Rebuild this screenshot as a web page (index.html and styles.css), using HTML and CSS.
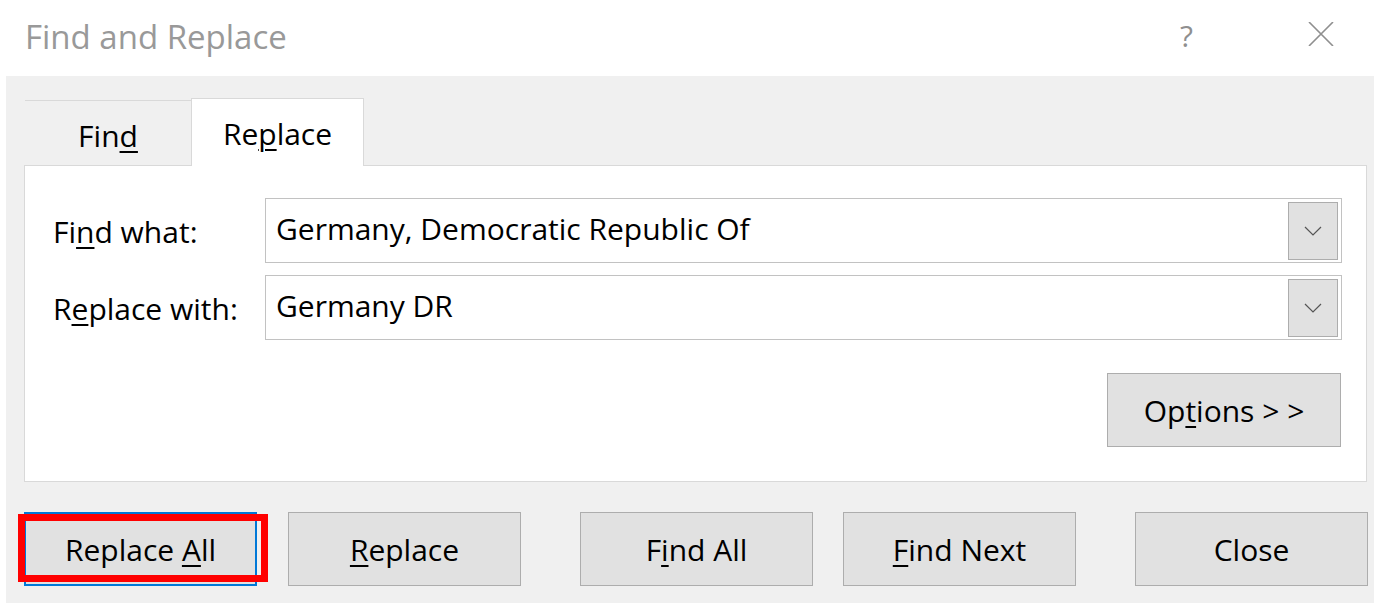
FILE: index.html
```html
<!DOCTYPE html>
<html>
<head>
<meta charset="utf-8">
<link rel="stylesheet" href="styles.css">
</head>
<body>
<div class="titlebar">
  <div class="title">Find and Replace</div>
  <div class="help">?</div>
  <svg class="close-x" width="26" height="24" viewBox="0 0 26 24"><path d="M1 0 L25 24 M25 0 L1 24" stroke="#8f8f8f" stroke-width="1.6" fill="none"/></svg>
</div>
<div class="panel">
  <div class="tabs">
    <div class="tab">Fin<u>d</u></div>
    <div class="tab active">Re<u>p</u>lace</div>
  </div>
  <div class="content">
    <div class="form">
      <label class="lbl">Fi<u>n</u>d what:</label>
      <div class="combo">
        <span class="val">Germany, Democratic Republic Of</span>
        <div class="drop"><svg width="18" height="10" viewBox="0 0 18 10"><path d="M1 1 L9 9 L17 1" stroke="#555" stroke-width="1.2" fill="none"/></svg></div>
      </div>
      <label class="lbl">R<u>e</u>place with:</label>
      <div class="combo">
        <span class="val">Germany DR</span>
        <div class="drop"><svg width="18" height="10" viewBox="0 0 18 10"><path d="M1 1 L9 9 L17 1" stroke="#555" stroke-width="1.2" fill="none"/></svg></div>
      </div>
    </div>
    <div class="opt-row">
      <button class="btn opt">Op<u>t</u>ions &gt; &gt;</button>
    </div>
  </div>
  <div class="actions">
    <button class="btn focused">Replace <u>A</u>ll<span class="highlight"></span></button>
    <button class="btn"><u>R</u>eplace</button>
    <button class="btn sep">F<u>i</u>nd All</button>
    <button class="btn"><u>F</u>ind Next</button>
    <button class="btn sep">Close</button>
  </div>
</div>
</body>
</html>
```

FILE: styles.css
```css
* { box-sizing: border-box; }
body {
  margin: 0;
  background: #ffffff;
  font-family: "Open Sans", "Noto Sans", sans-serif;
  color: #000;
}
u { text-decoration-thickness: 2px; text-underline-offset: 4px; }

.titlebar {
  height: 76px;
  display: flex;
  align-items: center;
  padding-left: 25px;
}
.title {
  font-size: 33px;
  color: #999999;
  margin-top: -4px;
}
.help {
  margin-left: auto;
  font-size: 30px;
  color: #8f8f8f;
  margin-top: -6px;
  margin-right: 115px;
}
.close-x { margin-right: 46px; margin-top: -8px; }

.panel {
  margin-left: 6px;
  width: 1368px;
  height: 527px;
  background: #f0f0f0;
  padding: 22px 6px 0 18px;
}
.tabs {
  display: flex;
  align-items: flex-end;
  height: 67px;
  margin-left: 1px;
}
.tab {
  width: 166px;
  height: 65px;
  border-top: 1px solid #d9d9d9;
  display: flex;
  align-items: center;
  justify-content: center;
  font-size: 30px;
  padding-top: 4px;
}
.tab.active {
  width: 173px;
  height: 68px;
  background: #fff;
  border: 1px solid #d9d9d9;
  border-bottom: none;
  margin-bottom: -1px;
  position: relative;
  z-index: 1;
  padding-top: 2px;
}
.content {
  width: 1343px;
  height: 317px;
  background: #fff;
  border: 1px solid #d9d9d9;
  padding: 32px 24px 0 28px;
}
.form {
  display: grid;
  grid-template-columns: 212px 1077px;
  grid-auto-rows: 65px;
  row-gap: 12px;
  align-items: center;
}
.lbl { font-size: 30px; padding-top: 2px; }
.combo {
  height: 65px;
  border: 1px solid #c2c2c2;
  display: flex;
  align-items: center;
  padding: 0 3px 0 10px;
}
.val { font-size: 30px; flex: 1; padding-bottom: 4px; }
.drop {
  width: 50px;
  height: 58px;
  background: #e1e1e1;
  border: 1px solid #adadad;
  display: flex;
  align-items: center;
  justify-content: center;
}
.opt-row {
  display: flex;
  justify-content: flex-end;
  margin-top: 33px;
  margin-right: 1px;
}
.btn {
  width: 233px;
  height: 74px;
  background: #e1e1e1;
  border: 1px solid #adadad;
  font-family: inherit;
  font-size: 30px;
  color: #000;
  padding: 0;
  position: relative;
}
.btn.opt { width: 234px; }
.actions {
  display: flex;
  gap: 30px;
  margin-top: 30px;
}
.btn.sep { margin-left: 29px; }
.btn.focused { border: 2px solid #0078d7; margin-right: 1px; }
.highlight {
  position: absolute;
  left: -8px;
  top: 0px;
  width: 250px;
  height: 68px;
  border: 7px solid #ff0000;
}
```
